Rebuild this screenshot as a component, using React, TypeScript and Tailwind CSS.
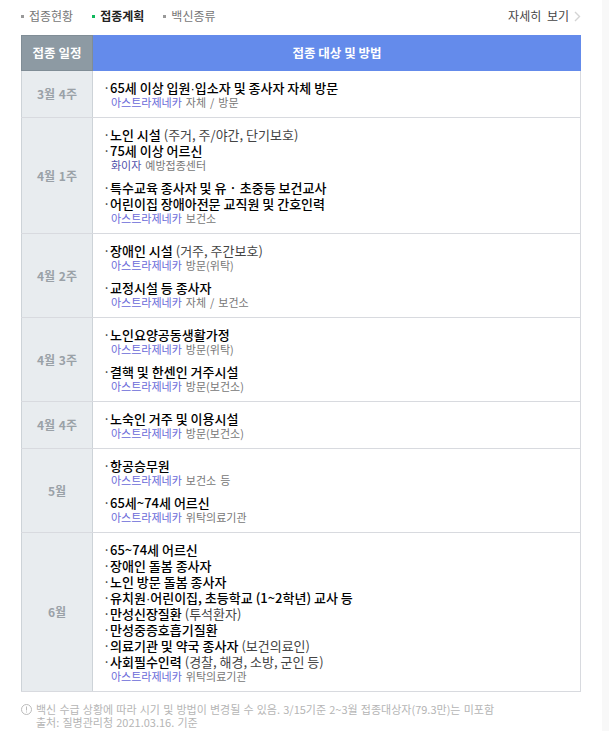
const AZ = "아스트라제네카";

type Sub = { brand: string; rest: string };
type Line = { text: string; note?: string };
type Group = { lines: Line[]; sub: Sub };
type Row = { label: string; groups: Group[] };

const rows: Row[] = [
  {
    label: "3월 4주",
    groups: [{ lines: [{ text: "65세 이상 입원·입소자 및 종사자 자체 방문" }], sub: { brand: AZ, rest: "자체 / 방문" } }],
  },
  {
    label: "4월 1주",
    groups: [
      {
        lines: [{ text: "노인 시설", note: "(주거, 주/야간, 단기보호)" }, { text: "75세 이상 어르신" }],
        sub: { brand: "화이자", rest: "예방접종센터" },
      },
      {
        lines: [{ text: "특수교육 종사자 및 유 · 초중등 보건교사" }, { text: "어린이집 장애아전문 교직원 및 간호인력" }],
        sub: { brand: AZ, rest: "보건소" },
      },
    ],
  },
  {
    label: "4월 2주",
    groups: [
      { lines: [{ text: "장애인 시설", note: "(거주, 주간보호)" }], sub: { brand: AZ, rest: "방문(위탁)" } },
      { lines: [{ text: "교정시설 등 종사자" }], sub: { brand: AZ, rest: "자체 / 보건소" } },
    ],
  },
  {
    label: "4월 3주",
    groups: [
      { lines: [{ text: "노인요양공동생활가정" }], sub: { brand: AZ, rest: "방문(위탁)" } },
      { lines: [{ text: "결핵 및 한센인 거주시설" }], sub: { brand: AZ, rest: "방문(보건소)" } },
    ],
  },
  {
    label: "4월 4주",
    groups: [{ lines: [{ text: "노숙인 거주 및 이용시설" }], sub: { brand: AZ, rest: "방문(보건소)" } }],
  },
  {
    label: "5월",
    groups: [
      { lines: [{ text: "항공승무원" }], sub: { brand: AZ, rest: "보건소 등" } },
      { lines: [{ text: "65세~74세 어르신" }], sub: { brand: AZ, rest: "위탁의료기관" } },
    ],
  },
  {
    label: "6월",
    groups: [
      {
        lines: [
          { text: "65~74세 어르신" },
          { text: "장애인 돌봄 종사자" },
          { text: "노인 방문 돌봄 종사자" },
          { text: "유치원·어린이집, 초등학교 (1~2학년) 교사 등" },
          { text: "만성신장질환", note: "(투석환자)" },
          { text: "만성중증호흡기질환" },
          { text: "의료기관 및 약국 종사자", note: "(보건의료인)" },
          { text: "사회필수인력", note: "(경찰, 해경, 소방, 군인 등)" },
        ],
        sub: { brand: AZ, rest: "위탁의료기관" },
      },
    ],
  },
];

const Tab = ({ label, active }: { label: string; active?: boolean }) => (
  <div className={active ? "flex items-center gap-[5px] font-semibold text-[#222]" : "flex items-center gap-[5px] text-[#777]"}>
    <span className={active ? "w-[3px] h-[3px] bg-[#0fb85c]" : "w-[3px] h-[3px] bg-[#999]"} />
    {label}
  </div>
);

// the CJK font's middle dot is too wide, so take it from Liberation Sans
const MainText = ({ text }: { text: string }) => {
  const parts = text.split("·");
  if (parts.length === 1 || text.includes(" · ")) return <>{text}</>;
  return (
    <>
      {parts[0]}
      <span className="font-['Liberation_Sans']">·</span>
      {parts[1]}
    </>
  );
};

export default function App() {
  return (
    <div className="h-[731px] overflow-hidden bg-white flex font-['Noto_Sans_CJK_KR','Noto_Sans',sans-serif] text-[12px]">
      <div className="w-[602px] pl-[21px] pr-[21px]">
        <div className="flex items-center justify-between h-[35px] pb-[3px]">
          <div className="flex gap-[19px]">
            <Tab label="접종현황" />
            <Tab label="접종계획" active />
            <Tab label="백신종류" />
          </div>
          <div className="flex items-center gap-[5px] text-[#444] [word-spacing:3px]">
            자세히 보기
            <svg width="7" height="11" viewBox="0 0 7 11" fill="none">
              <path d="M1 1l4.5 4.5L1 10" stroke="#d4d4d4" strokeWidth="1.4" />
            </svg>
          </div>
        </div>

        <div className="border border-[#d8dadf] border-t-0">
          <div className="flex h-[36px] -mx-px text-white text-[12.5px] font-semibold">
            <div className="w-[72px] shrink-0 bg-[#8d9aa3] border border-[#808d96] flex items-center justify-center">접종 일정</div>
            <div className="flex-1 bg-[#648beb] flex items-center justify-center">접종 대상 및 방법</div>
          </div>
          {rows.map((row) => (
            <div key={row.label} className="flex border-b border-[#d8dadf] last:border-b-0">
              <div className="w-[72px] shrink-0 bg-[#e8ecef] border-r border-[#cdd3d8] -ml-px border-l flex items-center justify-center font-semibold text-[#9aa1a7] [word-spacing:1px]">
                {row.label}
              </div>
              <div className="flex-1 pl-[11px] pt-[9px] pb-[7px] flex flex-col gap-[7px] text-[13px]">
                {row.groups.map((group, i) => (
                  <div key={i}>
                    {group.lines.map((line) => (
                      <div key={line.text} className="h-[16px] leading-[16px] flex">
                        <span className="w-[6px] -ml-px mr-px text-[#333]">·</span>
                        <span className="font-medium text-black">
                          <MainText text={line.text} />
                        </span>
                        {line.note && <span className="ml-[3px] text-[#444]">{line.note}</span>}
                      </div>
                    ))}
                    <div className="h-[14px] leading-[13px] pl-[7px] text-[11px] text-[#777] [word-spacing:1.5px]">
                      <span className={group.sub.brand === AZ ? "text-[#6a6ad8]" : "text-[#5050aa]"}>{group.sub.brand}</span>{" "}
                      {group.sub.rest}
                    </div>
                  </div>
                ))}
              </div>
            </div>
          ))}
        </div>

        <div className="flex mt-[11px] text-[11px] leading-[13px] text-[#b5b5b5] [word-spacing:0.7px]">
          <svg width="11" height="11" viewBox="0 0 11 11" fill="none" className="mt-[1px] mr-[4px] shrink-0">
            <circle cx="5.5" cy="5.5" r="5" stroke="#bbb" />
            <path d="M5.5 2.5v4" stroke="#bbb" />
            <path d="M5.5 7.5v1" stroke="#bbb" />
          </svg>
          <div>
            <div>백신 수급 상황에 따라 시기 및 방법이 변경될 수 있음. 3/15기준 2~3월 접종대상자(79.3만)는 미포함</div>
            <div>출처: 질병관리청 2021.03.16. 기준</div>
          </div>
        </div>
      </div>
      <div className="flex-1 bg-[#f8f8f8]" />
    </div>
  );
}
